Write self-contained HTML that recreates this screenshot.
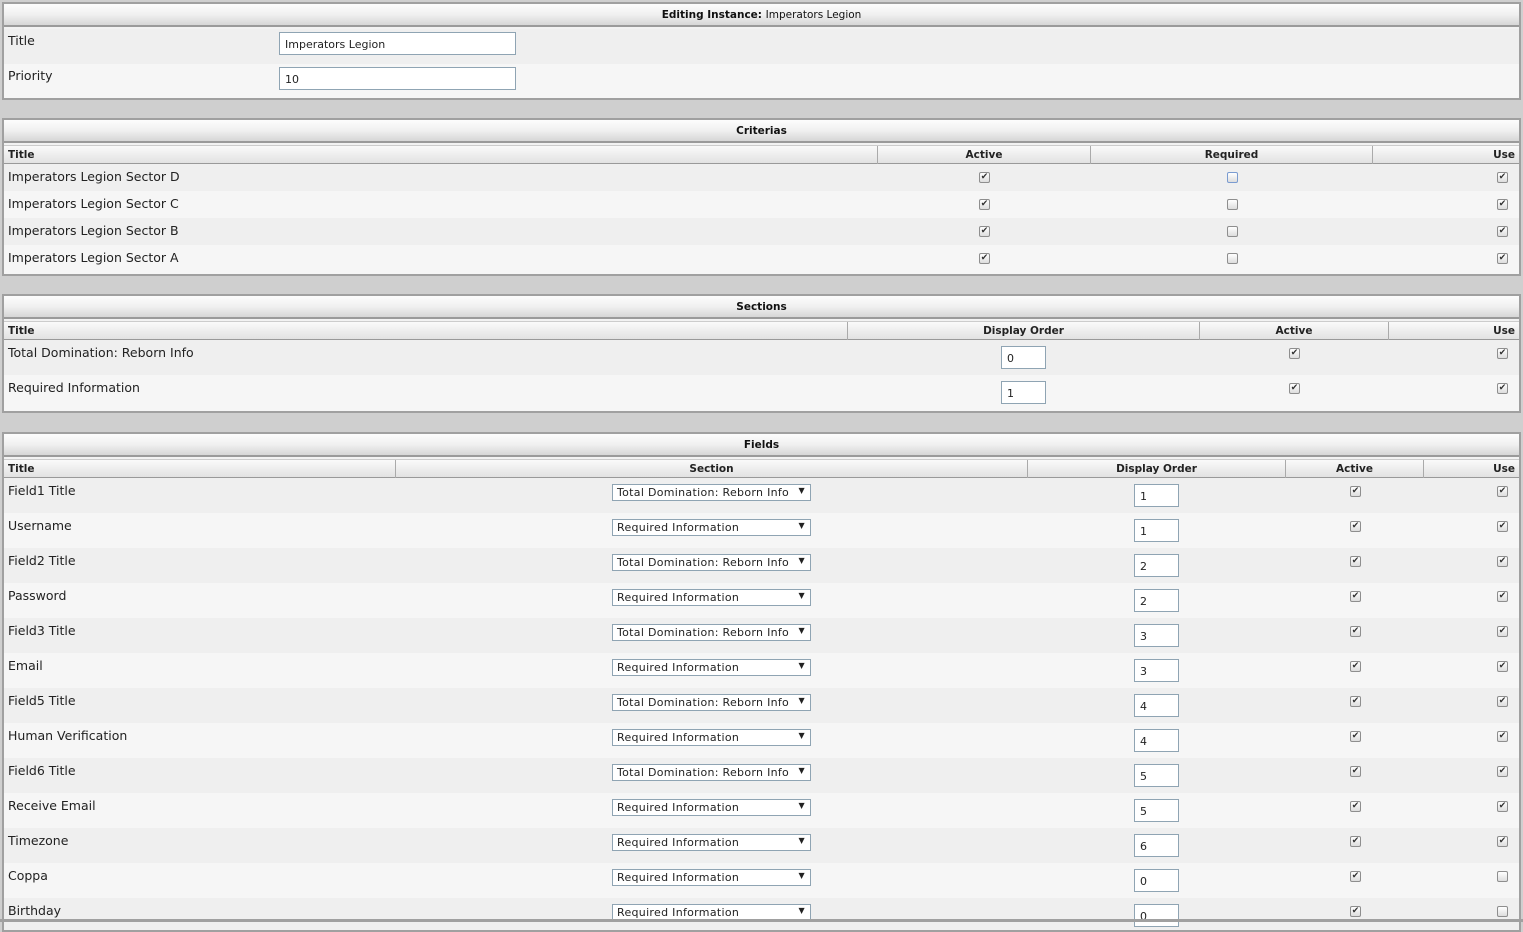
<!DOCTYPE html>
<html><head><meta charset="utf-8"><style>
*{margin:0;padding:0;box-sizing:border-box}
body{width:1523px;height:922px;overflow:hidden;background:#cfcfcf;font-family:"DejaVu Sans","Liberation Sans",sans-serif;position:relative;color:#222}
.a{position:absolute}
.p{position:absolute;left:2px;width:1519px;border:2px solid #a0a0a0;background:#f2f2f2;overflow:hidden}
.h{position:absolute;left:0;right:0;height:23px;background:linear-gradient(#fdfdfd,#f0f0f0 50%,#d6d6d6);border-bottom:2px solid #9a9a9a;font:bold 10.5px "DejaVu Sans",sans-serif;text-align:center;line-height:22px;color:#111}
.h span{font-weight:normal}
.ch{position:absolute;left:0;right:0;height:19px;top:25px;background:linear-gradient(#fafafa,#e2e2e2);border-bottom:1px solid #999;border-top:1px solid #ccc;font:bold 10.5px "DejaVu Sans",sans-serif;line-height:18px}
.ch div{position:absolute;top:0;height:18px;border-left:1px solid #aaa;text-align:center}
.r{position:absolute;left:0;right:0;font-size:12.5px;padding-left:4px}
.o{background:#efefef}.e{background:#f6f6f6}
.in{position:absolute;height:23px;border:1px solid #8fa4b3;background:#fff;font-size:11px;padding:5px 0 0 5px}
.sel{position:absolute;width:199px;height:17px;border:1px solid #8fa4b3;background:#fff;font-size:11px;padding:1px 0 0 4px;letter-spacing:.3px}
.sel:after{content:"▼";position:absolute;right:5px;top:1px;font-size:8px}
.cb{position:absolute;width:11px;height:11px;border:1px solid #8e8e8e;border-radius:2px;background:linear-gradient(#fff,#ddd);font-size:9px;line-height:9px;text-align:center;color:#333}
</style></head><body>

<div class="p" style="top:2px;height:98px">
 <div class="h" style="top:0">Editing Instance: <span>Imperators Legion</span></div>
 <div class="r o" style="top:25px;height:35px;padding-top:4px">Title</div>
 <div class="r e" style="top:60px;height:36px;padding-top:4px">Priority</div>
 <div class="in" style="left:275px;top:28px;width:237px">Imperators Legion</div>
 <div class="in" style="left:275px;top:63px;width:237px">10</div>
</div>

<div class="p" style="top:118px;height:158px">
 <div class="h" style="top:0">Criterias</div>
 <div class="ch"><div style="left:0;width:873px;text-align:left;padding-left:4px;border:0">Title</div><div style="left:873px;width:213px">Active</div><div style="left:1086px;width:282px">Required</div><div style="left:1368px;width:147px;text-align:right;padding-right:4px">Use</div></div>
 <div class="r o" style="top:44px;height:27px;padding-top:5px">Imperators Legion Sector D</div>
 <div class="r e" style="top:71px;height:27px;padding-top:5px">Imperators Legion Sector C</div>
 <div class="r o" style="top:98px;height:27px;padding-top:5px">Imperators Legion Sector B</div>
 <div class="r e" style="top:125px;height:29px;padding-top:5px">Imperators Legion Sector A</div>
 <div class="cb" style="left:975px;top:52px">✔</div><div class="cb" style="left:1223px;top:52px;border-color:#7a9bd0"></div><div class="cb" style="left:1493px;top:52px">✔</div>
 <div class="cb" style="left:975px;top:79px">✔</div><div class="cb" style="left:1223px;top:79px"></div><div class="cb" style="left:1493px;top:79px">✔</div>
 <div class="cb" style="left:975px;top:106px">✔</div><div class="cb" style="left:1223px;top:106px"></div><div class="cb" style="left:1493px;top:106px">✔</div>
 <div class="cb" style="left:975px;top:133px">✔</div><div class="cb" style="left:1223px;top:133px"></div><div class="cb" style="left:1493px;top:133px">✔</div>
</div>

<div class="p" style="top:294px;height:119px">
 <div class="h" style="top:0">Sections</div>
 <div class="ch"><div style="left:0;width:843px;text-align:left;padding-left:4px;border:0">Title</div><div style="left:843px;width:352px">Display Order</div><div style="left:1195px;width:189px">Active</div><div style="left:1384px;width:131px;text-align:right;padding-right:4px">Use</div></div>
 <div class="r o" style="top:44px;height:35px;padding-top:5px">Total Domination: Reborn Info</div>
 <div class="r e" style="top:79px;height:36px;padding-top:5px">Required Information</div>
 <div class="in" style="left:997px;top:50px;width:45px">0</div>
 <div class="in" style="left:997px;top:85px;width:45px">1</div>
 <div class="cb" style="left:1285px;top:52px">✔</div><div class="cb" style="left:1493px;top:52px">✔</div>
 <div class="cb" style="left:1285px;top:87px">✔</div><div class="cb" style="left:1493px;top:87px">✔</div>
</div>

<div class="p" style="top:432px;height:500px">
 <div class="h" style="top:0">Fields</div>
 <div class="ch"><div style="left:0;width:391px;text-align:left;padding-left:4px;border:0">Title</div><div style="left:391px;width:632px">Section</div><div style="left:1023px;width:258px">Display Order</div><div style="left:1281px;width:138px">Active</div><div style="left:1419px;width:96px;text-align:right;padding-right:4px">Use</div></div>
 <div class="r o" style="top:44px;height:35px;padding-top:5px">Field1 Title</div>
 <div class="r e" style="top:79px;height:35px;padding-top:5px">Username</div>
 <div class="r o" style="top:114px;height:35px;padding-top:5px">Field2 Title</div>
 <div class="r e" style="top:149px;height:35px;padding-top:5px">Password</div>
 <div class="r o" style="top:184px;height:35px;padding-top:5px">Field3 Title</div>
 <div class="r e" style="top:219px;height:35px;padding-top:5px">Email</div>
 <div class="r o" style="top:254px;height:35px;padding-top:5px">Field5 Title</div>
 <div class="r e" style="top:289px;height:35px;padding-top:5px">Human Verification</div>
 <div class="r o" style="top:324px;height:35px;padding-top:5px">Field6 Title</div>
 <div class="r e" style="top:359px;height:35px;padding-top:5px">Receive Email</div>
 <div class="r o" style="top:394px;height:35px;padding-top:5px">Timezone</div>
 <div class="r e" style="top:429px;height:35px;padding-top:5px">Coppa</div>
 <div class="r o" style="top:464px;height:35px;padding-top:5px">Birthday</div>

 <div class="sel" style="left:608px;top:50px">Total Domination: Reborn Info</div>
 <div class="sel" style="left:608px;top:85px">Required Information</div>
 <div class="sel" style="left:608px;top:120px">Total Domination: Reborn Info</div>
 <div class="sel" style="left:608px;top:155px">Required Information</div>
 <div class="sel" style="left:608px;top:190px">Total Domination: Reborn Info</div>
 <div class="sel" style="left:608px;top:225px">Required Information</div>
 <div class="sel" style="left:608px;top:260px">Total Domination: Reborn Info</div>
 <div class="sel" style="left:608px;top:295px">Required Information</div>
 <div class="sel" style="left:608px;top:330px">Total Domination: Reborn Info</div>
 <div class="sel" style="left:608px;top:365px">Required Information</div>
 <div class="sel" style="left:608px;top:400px">Required Information</div>
 <div class="sel" style="left:608px;top:435px">Required Information</div>
 <div class="sel" style="left:608px;top:470px">Required Information</div>

 <div class="in" style="left:1130px;top:50px;width:45px">1</div>
 <div class="in" style="left:1130px;top:85px;width:45px">1</div>
 <div class="in" style="left:1130px;top:120px;width:45px">2</div>
 <div class="in" style="left:1130px;top:155px;width:45px">2</div>
 <div class="in" style="left:1130px;top:190px;width:45px">3</div>
 <div class="in" style="left:1130px;top:225px;width:45px">3</div>
 <div class="in" style="left:1130px;top:260px;width:45px">4</div>
 <div class="in" style="left:1130px;top:295px;width:45px">4</div>
 <div class="in" style="left:1130px;top:330px;width:45px">5</div>
 <div class="in" style="left:1130px;top:365px;width:45px">5</div>
 <div class="in" style="left:1130px;top:400px;width:45px">6</div>
 <div class="in" style="left:1130px;top:435px;width:45px">0</div>
 <div class="in" style="left:1130px;top:470px;width:45px">0</div>

 <div class="cb" style="left:1346px;top:52px">✔</div><div class="cb" style="left:1493px;top:52px">✔</div>
 <div class="cb" style="left:1346px;top:87px">✔</div><div class="cb" style="left:1493px;top:87px">✔</div>
 <div class="cb" style="left:1346px;top:122px">✔</div><div class="cb" style="left:1493px;top:122px">✔</div>
 <div class="cb" style="left:1346px;top:157px">✔</div><div class="cb" style="left:1493px;top:157px">✔</div>
 <div class="cb" style="left:1346px;top:192px">✔</div><div class="cb" style="left:1493px;top:192px">✔</div>
 <div class="cb" style="left:1346px;top:227px">✔</div><div class="cb" style="left:1493px;top:227px">✔</div>
 <div class="cb" style="left:1346px;top:262px">✔</div><div class="cb" style="left:1493px;top:262px">✔</div>
 <div class="cb" style="left:1346px;top:297px">✔</div><div class="cb" style="left:1493px;top:297px">✔</div>
 <div class="cb" style="left:1346px;top:332px">✔</div><div class="cb" style="left:1493px;top:332px">✔</div>
 <div class="cb" style="left:1346px;top:367px">✔</div><div class="cb" style="left:1493px;top:367px">✔</div>
 <div class="cb" style="left:1346px;top:402px">✔</div><div class="cb" style="left:1493px;top:402px">✔</div>
 <div class="cb" style="left:1346px;top:437px">✔</div><div class="cb" style="left:1493px;top:437px"></div>
 <div class="cb" style="left:1346px;top:472px">✔</div><div class="cb" style="left:1493px;top:472px"></div>
</div>
<div class="a" style="left:0;top:919px;width:1523px;height:3px;background:#a0a0a0"></div>
</body></html>
